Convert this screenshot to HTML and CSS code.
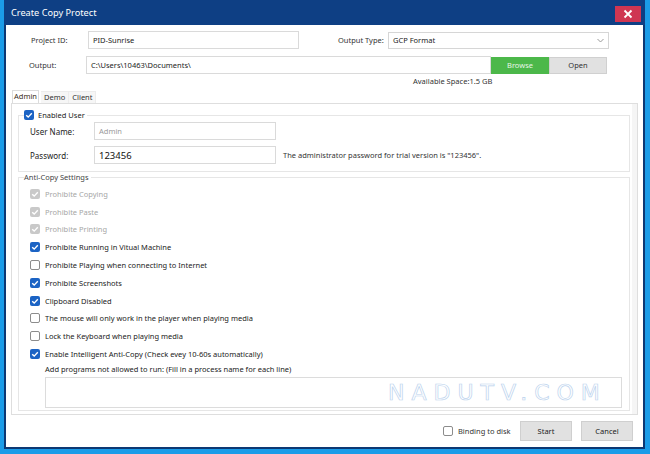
FILE: index.html
```html
<!DOCTYPE html>
<html>
<head>
<meta charset="utf-8">
<link rel="stylesheet" href="styles.css">
</head>
<body>
<div class="window">
  <div class="titlebar">
    <span class="title">Create Copy Protect</span>
    <span class="close"><svg width="10" height="10" viewBox="0 0 10 10"><path d="M1.5 1.5 L8.5 8.5 M8.5 1.5 L1.5 8.5" stroke="#fff" stroke-width="1.8" fill="none"/></svg></span>
  </div>
  <div class="content">
    <div class="row row1">
      <span class="lbl lbl-pid">Project ID:</span>
      <div class="input in-pid">PID-Sunrise</div>
      <span class="lbl lbl-type">Output Type:</span>
      <div class="select">GCP Format<svg class="chev" width="7" height="5" viewBox="0 0 7 5"><path d="M0.5 1 L3.5 4 L6.5 1" stroke="#9a9a9a" stroke-width="1" fill="none"/></svg></div>
    </div>
    <div class="row row2">
      <span class="lbl lbl-out">Output:</span>
      <div class="input in-out">C:\Users\10463\Documents\</div>
      <span class="btn browse">Browse</span>
      <span class="btn open">Open</span>
    </div>
    <div class="space">Available Space:1.5 GB</div>
    <div class="tabs">
      <span class="tab active">Admin</span>
      <span class="tab">Demo</span>
      <span class="tab">Client</span>
    </div>
    <div class="panel">
      <fieldset class="group g1">
        <legend class="legend"><span class="cb on"><svg width="10" height="10" viewBox="0 0 10 10"><path d="M2.2 5.2 L4.2 7.1 L7.8 3.2" stroke="#fff" stroke-width="1.4" fill="none"/></svg></span><span class="lg-text dark">Enabled User</span></legend>
        <div class="frow">
          <span class="flbl">User Name:</span>
          <div class="input in-user muted">Admin</div>
        </div>
        <div class="frow">
          <span class="flbl">Password:</span>
          <div class="input in-user pw">123456</div>
          <span class="note">The administrator password for trial version is "123456".</span>
        </div>
      </fieldset>
      <fieldset class="group g2">
        <legend class="legend"><span class="lg-text">Anti-Copy Settings</span></legend>
        <div class="opt dis"><span class="cb dis"><svg width="10" height="10" viewBox="0 0 10 10"><path d="M2.2 5.2 L4.2 7.1 L7.8 3.2" stroke="#fff" stroke-width="1.4" fill="none"/></svg></span>Prohibite Copying</div>
        <div class="opt dis"><span class="cb dis"><svg width="10" height="10" viewBox="0 0 10 10"><path d="M2.2 5.2 L4.2 7.1 L7.8 3.2" stroke="#fff" stroke-width="1.4" fill="none"/></svg></span>Prohibite Paste</div>
        <div class="opt dis"><span class="cb dis"><svg width="10" height="10" viewBox="0 0 10 10"><path d="M2.2 5.2 L4.2 7.1 L7.8 3.2" stroke="#fff" stroke-width="1.4" fill="none"/></svg></span>Prohibite Printing</div>
        <div class="opt"><span class="cb on"><svg width="10" height="10" viewBox="0 0 10 10"><path d="M2.2 5.2 L4.2 7.1 L7.8 3.2" stroke="#fff" stroke-width="1.4" fill="none"/></svg></span>Prohibite Running in Vitual Machine</div>
        <div class="opt"><span class="cb off"></span>Prohibite Playing when connecting to Internet</div>
        <div class="opt"><span class="cb on"><svg width="10" height="10" viewBox="0 0 10 10"><path d="M2.2 5.2 L4.2 7.1 L7.8 3.2" stroke="#fff" stroke-width="1.4" fill="none"/></svg></span>Prohibite Screenshots</div>
        <div class="opt"><span class="cb on"><svg width="10" height="10" viewBox="0 0 10 10"><path d="M2.2 5.2 L4.2 7.1 L7.8 3.2" stroke="#fff" stroke-width="1.4" fill="none"/></svg></span>Clipboard Disabled</div>
        <div class="opt"><span class="cb off"></span>The mouse will only work in the player when playing media</div>
        <div class="opt"><span class="cb off"></span>Lock the Keyboard when playing media</div>
        <div class="opt"><span class="cb on"><svg width="10" height="10" viewBox="0 0 10 10"><path d="M2.2 5.2 L4.2 7.1 L7.8 3.2" stroke="#fff" stroke-width="1.4" fill="none"/></svg></span>Enable Intelligent Anti-Copy (Check evey 10-60s automatically)</div>
        <div class="addline">Add programs not allowed to run: (Fill in a process name for each line)</div>
        <div class="textarea">
          <span class="watermark">NADUTV.COM</span>
        </div>
      </fieldset>
    </div>
    <div class="footer">
      <span class="cb off"></span>
      <span class="bind">Binding to disk</span>
      <span class="btn fbtn start">Start</span>
      <span class="btn fbtn cancel">Cancel</span>
    </div>
  </div>
</div>
</body>
</html>
```
FILE: styles.css
```css
html, body {
  margin: 0;
  padding: 0;
}
body {
  width: 650px;
  height: 454px;
  background: #1b9ce8;
  font-family: "Noto Sans", "Open Sans", sans-serif;
  font-size: 7.5px;
  color: #333;
  overflow: hidden;
}
.window {
  margin-left: 4px;
  width: 637px;
  height: 447px;
  border: 2px solid #0c3874;
  border-top: 0;
  background: #fff;
  display: flex;
  flex-direction: column;
}
.titlebar {
  height: 25px;
  background: #0e3f84;
  display: flex;
  align-items: center;
  margin: 0 -2px;
  padding: 0 0 0 7px;
}
.title {
  color: #fff;
  font-size: 9.2px;
}
.close {
  margin-left: auto;
  margin-right: 4px;
  width: 26px;
  height: 16px;
  background: #cf3652;
  display: flex;
  align-items: center;
  justify-content: center;
  margin-top: 3px;
}
.content {
  flex: 1;
  display: flex;
  flex-direction: column;
}
.row {
  display: flex;
  align-items: center;
}
.row1 {
  margin-top: 6px;
  padding-left: 25px;
  height: 18px;
}
.row2 {
  margin-top: 7px;
  padding-left: 23px;
  height: 18px;
}
.lbl {
  width: 57px;
  flex: none;
}
.lbl-type {
  width: 50px;
  margin-left: 39px;
}
.input {
  box-sizing: border-box;
  height: 18px;
  border: 1px solid #dadada;
  background: #fff;
  display: flex;
  align-items: center;
  padding-left: 4px;
  color: #222;
  flex: none;
}
.in-pid { width: 211px; }
.in-out { width: 405px; }
.select {
  box-sizing: border-box;
  width: 221px;
  height: 17px;
  border: 1px solid #d6d6d6;
  display: flex;
  align-items: center;
  padding: 0 4px 0 4px;
  color: #222;
}
.chev { margin-left: auto; }
.btn {
  box-sizing: border-box;
  display: flex;
  align-items: center;
  justify-content: center;
  flex: none;
  white-space: nowrap;
}
.browse {
  width: 58px;
  height: 17px;
  background: #4cb84a;
  color: #e8f6e6;
}
.open {
  width: 58px;
  height: 17px;
  background: #e1e1e1;
  border: 1px solid #d0d0d0;
  color: #333;
}
.space {
  margin-left: 407px;
  margin-top: 1px;
  height: 12px;
  line-height: 12px;
  color: #333;
}
.tabs {
  margin-top: 4px;
  margin-left: 6px;
  display: flex;
  height: 12px;
  align-items: flex-end;
}
.tab {
  height: 11px;
  line-height: 11px;
  padding: 0 3px;
  color: #333;
  background: #f6f6f6;
  border-top: 1px solid #ececec;
  border-right: 1px solid #ececec;
}
.tab.active {
  height: 12px;
  background: #fff;
  border: 1px solid #dcdcdc;
  border-bottom: 0;
  padding: 0 1px 0 1px;
  color: #3a2a20;
  margin-right: 2px;
}
.panel {
  box-sizing: border-box;
  margin-left: 5px;
  width: 627px;
  height: 312px;
  border: 1px solid #dedede;
  background: linear-gradient(to right, #fff 0, #fff 620px, #f5f5f5 620px);
  padding: 4px 6px 0;
}
.group {
  margin: 0;
  width: 612px;
  box-sizing: border-box;
  border: 1px solid #e6e6e6;
  padding: 0 0 0 5px;
  min-width: 0;
  background: #fff;
}
.legend {
  padding: 0 2px 0 0;
  display: flex;
  align-items: center;
  height: 10px;
  line-height: 10px;
}
.lg-text { color: #444; }
.lg-text.dark { color: #222; margin-left: 4px; }
.g1 {
  margin-top: 2px;
  padding-top: 2px;
  padding-bottom: 7px;
}
.frow {
  display: flex;
  align-items: center;
  padding-left: 6px;
  height: 18px;
}
.frow + .frow { margin-top: 6px; }
.flbl {
  width: 64px;
  color: #222;
  font-size: 8px;
}
.in-user { width: 182px; }
.muted { color: #9a9a9a; }
.pw { font-size: 9.5px; color: #111; }
.note {
  margin-left: 7px;
  color: #333;
}
.g2 {
  margin-top: 0;
  padding-top: 3px;
  padding-bottom: 2px;
}
.opt {
  display: flex;
  align-items: center;
  height: 17.8px;
  padding-left: 6px;
  color: #222;
}
.opt.dis { color: #a6a6a6; }
.cb {
  box-sizing: border-box;
  width: 10px;
  height: 10px;
  border-radius: 2px;
  flex: none;
  margin-right: 5px;
  display: flex;
}
.cb svg { display: block; }
.cb.on { background: #1b63c4; }
.cb.dis { background: #c9c9c9; }
.cb.off { border: 1px solid #8c8c8c; background: #fff; }
.legend .cb { margin-right: 0; }
.addline {
  padding-left: 21px;
  height: 13px;
  line-height: 13px;
  color: #222;
}
.textarea {
  position: relative;
  box-sizing: border-box;
  margin-left: 21px;
  margin-top: 1px;
  width: 577px;
  height: 31px;
  border: 1px solid #dcdcdc;
  background: #fff;
}
.watermark {
  position: absolute;
  left: 342px;
  top: 2px;
  font-family: "DejaVu Sans", sans-serif;
  font-size: 22px;
  line-height: 26px;
  letter-spacing: 7px;
  color: #fff;
  -webkit-text-stroke: 0.7px #bcd3ee;
  white-space: nowrap;
}
.footer {
  flex: 1;
  display: flex;
  align-items: center;
  padding-left: 437px;
  padding-right: 10px;
}
.footer .cb { margin-right: 5px; }
.bind { color: #333; white-space: nowrap; }
.fbtn {
  width: 52px;
  height: 20px;
  background: #e1e1e1;
  border: 1px solid #cfcfcf;
  color: #222;
}
.start { margin-left: auto; }
.cancel { margin-left: 9px; }
```
